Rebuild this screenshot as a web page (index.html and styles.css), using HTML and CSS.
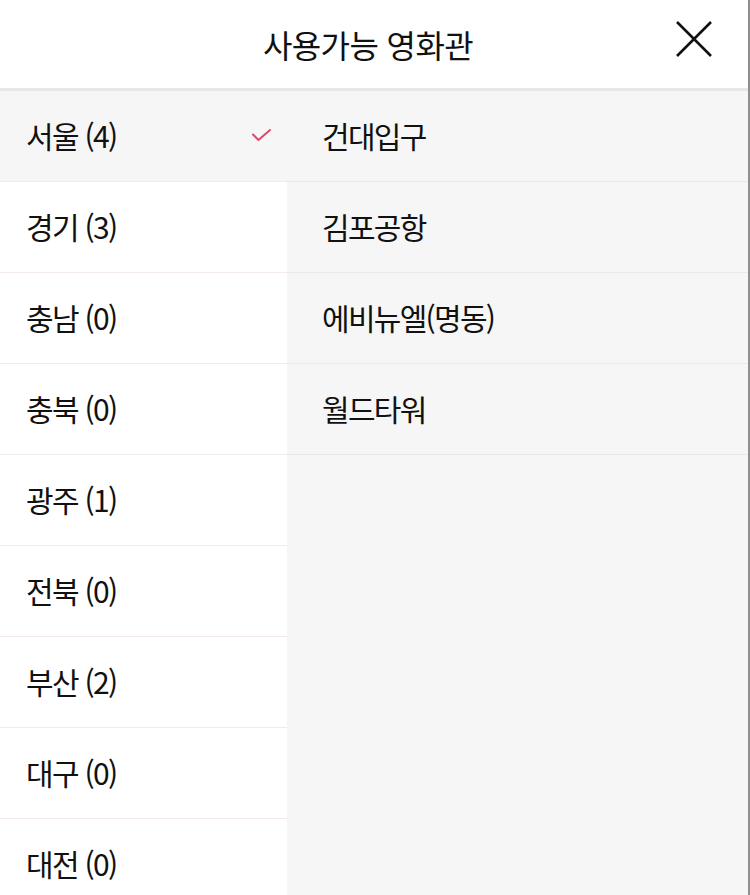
FILE: index.html
```html
<!DOCTYPE html>
<html lang="ko">
<head>
<meta charset="utf-8">
<title>사용가능 영화관</title>
<link rel="stylesheet" href="styles.css">
</head>
<body>
<div class="page">
  <header class="header">
    <h1 class="title">사용가능 영화관</h1>
    <button class="close" aria-label="닫기">
      <svg width="36" height="36" viewBox="0 0 36 36"><path d="M1 1 L35 35 M35 1 L1 35" stroke="#111" stroke-width="2.6" fill="none"/></svg>
    </button>
  </header>
  <main class="body">
    <ul class="regions">
      <li class="region selected"><span class="label">서울 (4)</span>
        <svg class="check" width="22" height="14" viewBox="0 0 22 14"><path d="M2 6.5 L7.5 12 L19 2" stroke="#e0476e" stroke-width="2" fill="none" stroke-linecap="round" stroke-linejoin="round"/></svg>
      </li>
      <li class="region"><span class="label">경기 (3)</span></li>
      <li class="region"><span class="label">충남 (0)</span></li>
      <li class="region"><span class="label">충북 (0)</span></li>
      <li class="region"><span class="label">광주 (1)</span></li>
      <li class="region"><span class="label">전북 (0)</span></li>
      <li class="region"><span class="label">부산 (2)</span></li>
      <li class="region"><span class="label">대구 (0)</span></li>
      <li class="region"><span class="label">대전 (0)</span></li>
    </ul>
    <ul class="theaters">
      <li class="theater"><span class="label">건대입구</span></li>
      <li class="theater"><span class="label">김포공항</span></li>
      <li class="theater"><span class="label">에비뉴엘(명동)</span></li>
      <li class="theater"><span class="label">월드타워</span></li>
    </ul>
  </main>
</div>
</body>
</html>
```

FILE: styles.css
```css
html, body {
  margin: 0;
  padding: 0;
  background: #fff;
}
body {
  font-family: "Noto Sans CJK KR", "Noto Sans", sans-serif;
  color: #111;
  width: 750px;
  height: 895px;
  overflow: hidden;
}
.page {
  width: 748px;
  height: 895px;
  border-right: 2px solid #8f8f8f;
  display: flex;
  flex-direction: column;
}
.header {
  height: 88px;
  flex: none;
  border-bottom: 3px solid #e7e7e7;
  display: flex;
  align-items: center;
  justify-content: center;
  position: relative;
}
.title {
  margin: 0 12px 0 0;
  font-size: 32px;
  font-weight: 400;
  letter-spacing: -0.6px;
  line-height: 1;
}
.close {
  position: absolute;
  right: 36px;
  top: 21px;
  border: 0;
  background: none;
  padding: 0;
  width: 36px;
  height: 36px;
}
.close svg { display: block; }
.body {
  flex: 1;
  display: flex;
  min-height: 0;
}
ul {
  list-style: none;
  margin: 0;
  padding: 0;
}
.regions {
  width: 287px;
  flex: none;
  background: #fff;
}
.theaters {
  flex: 1;
  background: #f6f6f6;
}
.region, .theater {
  height: 90px;
  display: flex;
  align-items: center;
  font-size: 30px;
  letter-spacing: -1.7px;
  line-height: 1;
}
.region {
  padding: 0 14px 0 26px;
  justify-content: space-between;
  border-bottom: 1px solid #f1e9ee;
}
.region.selected {
  background: #f6f6f6;
}
.theater {
  padding-left: 35px;
  border-bottom: 1px solid #e9e9e9;
}
.check { display: block; margin-top: -2px; }
.label { position: relative; top: -1px; }
```
